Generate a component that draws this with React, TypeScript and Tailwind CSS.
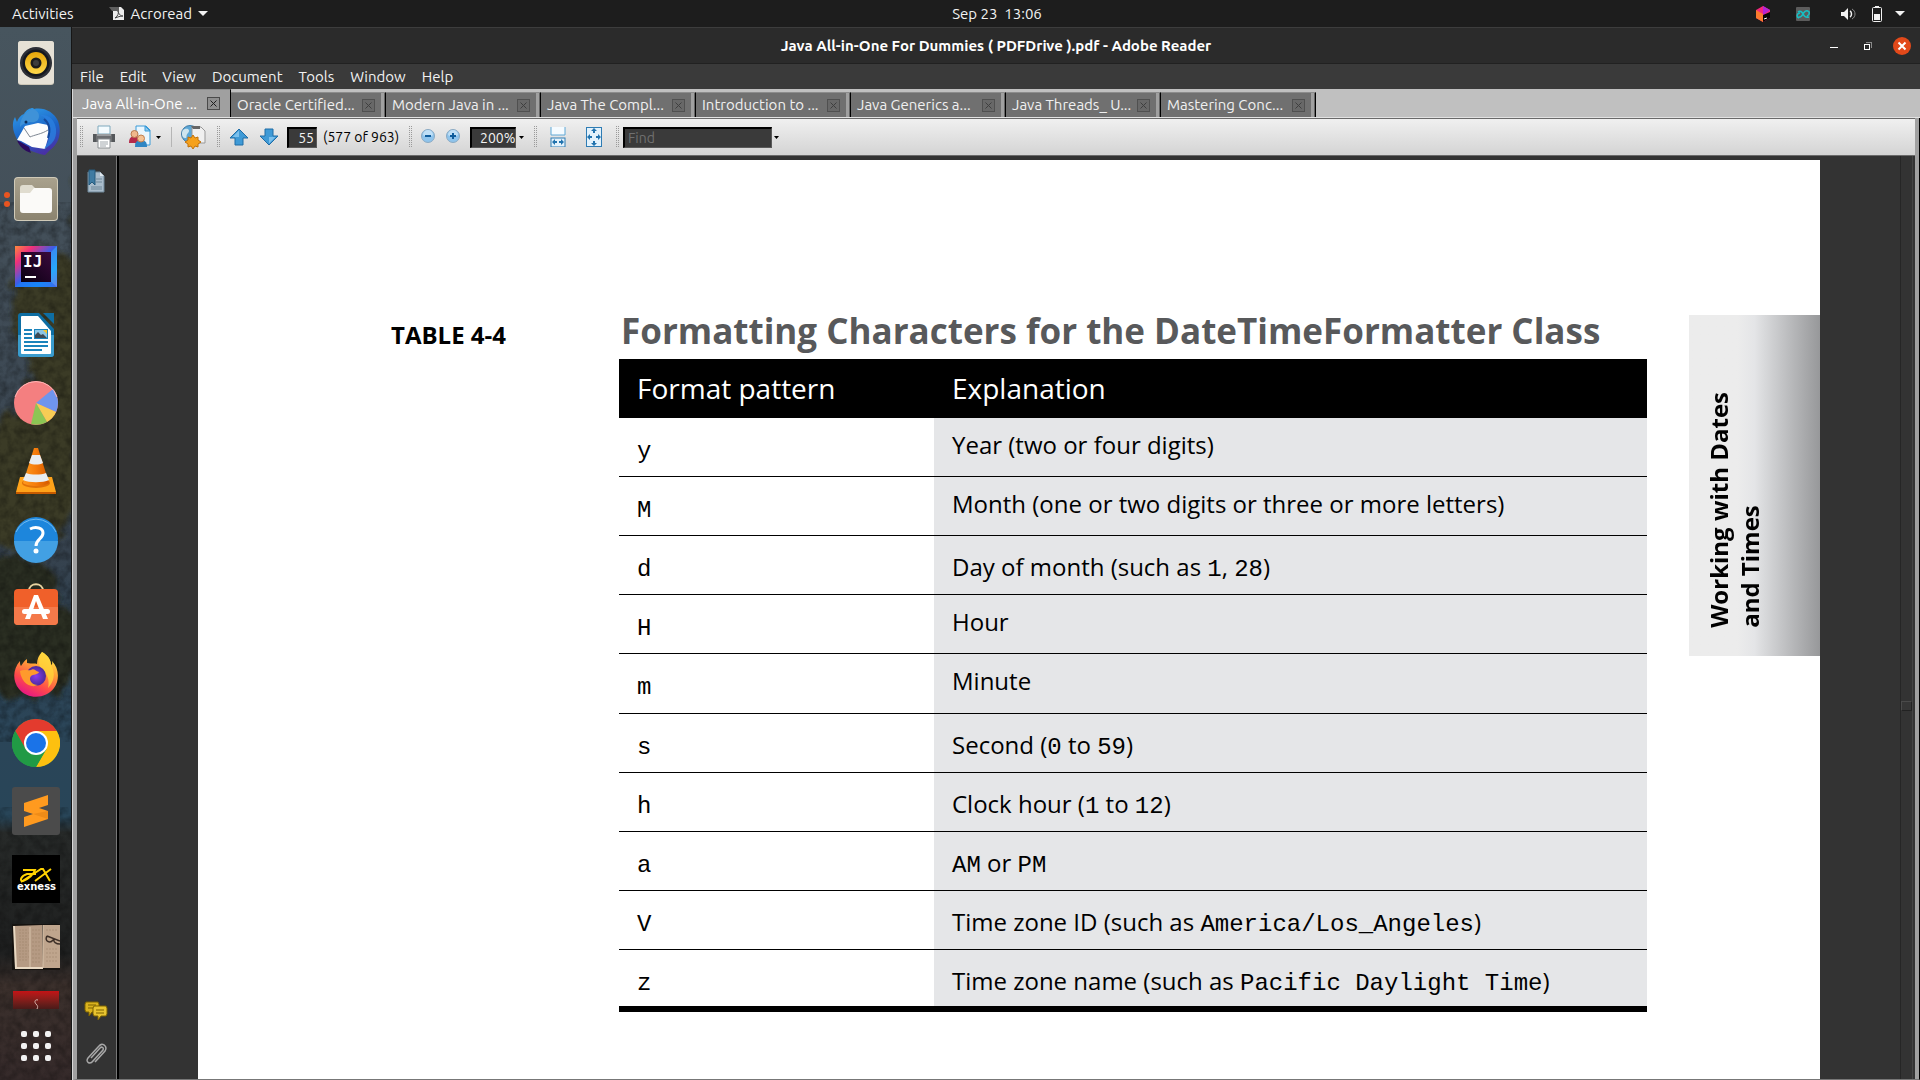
import React from "react";

const UI = "font-['Ubuntu','Open_Sans',sans-serif]";

/* ---------- dock icons ---------- */

const Rhythmbox = () => (
  <svg viewBox="0 0 48 48" className="size-12">
    <defs>
      <linearGradient id="rb" x1="0" y1="0" x2="0" y2="1"><stop offset="0" stopColor="#e5a50a" /><stop offset="1" stopColor="#ffd84a" /></linearGradient>
    </defs>
    <rect x="6" y="2" width="36" height="44" rx="3" fill="#cdc7b8" />
    <rect x="6" y="2" width="36" height="43" rx="3" fill="#e6e1d6" />
    <circle cx="24" cy="24" r="16" fill="#2d2f36" />
    <circle cx="24" cy="24" r="13.500" fill="#15181f" />
    <circle cx="24" cy="24" r="11" fill="url(#rb)" />
    <circle cx="24" cy="24" r="5.500" fill="#1b1b1b" />
    <circle cx="24" cy="24" r="3" fill="#3c3c3c" />
  </svg>
);

const Thunderbird = () => (
  <svg viewBox="0 0 48 48" className="size-12">
    <defs>
      <linearGradient id="tb" x1="0.2" y1="0" x2="0.6" y2="1"><stop offset="0" stopColor="#2f9be8" /><stop offset="0.55" stopColor="#1b63c6" /><stop offset="1" stopColor="#4a2fa5" /></linearGradient>
    </defs>
    <path d="M6 34C1 26 -1 17 3 10l2 5c1-4 4-7 7-8C14 3 18 1 21 1l1 1c10-2 20 3 24 12 4 11 1 23-8 29l-5 5C22 46 12 42 6 34z" fill="url(#tb)" />
    <path d="M5 33c2 6 7 11 14 13l-2-6z" fill="#2c0b5e" />
    <path d="M5 33L13 19l13-3 10 2 2 6-5 18-13-2-11-6z" fill="#fdfdfd" />
    <path d="M12 21l6 9c4-2 12-3 18-7" fill="none" stroke="#7d8692" strokeWidth="1" />
    <path d="M8 20C8 12 13 4 21 2c3 1 6 3 6 7 0 5-4 7-9 6-4 1-8 2-10 5z" fill="#3f92d8" />
    <path d="M28 8c6 2 11 8 10 17-1 8-3 12-6 17 8-4 13-10 12-20C43 13 37 7 28 8z" fill="#2a7fe0" opacity=".8" />
    <path d="M32 12c5 4 7 10 4 19" fill="none" stroke="#164a9c" strokeWidth="2" />
    <circle cx="14" cy="15" r="1.500" fill="#0c2e5c" />
  </svg>
);

const Files = () => (
  <svg viewBox="0 0 48 48" className="size-12">
    <defs><linearGradient id="fl" x1="0" y1="0" x2="0" y2="1"><stop offset="0" stopColor="#a9a18d" /><stop offset="1" stopColor="#8b836f" /></linearGradient></defs>
    <rect x="2" y="2" width="44" height="44" rx="4" fill="#d0cab8" />
    <rect x="3" y="3" width="42" height="42" rx="3" fill="url(#fl)" />
    <path d="M8 13a3 3 0 013-3h9l3 3h14v8H8z" fill="#e0dccf" />
    <path d="M8 18h10l4-5h15a3 3 0 013 3v19a3 3 0 01-3 3H11a3 3 0 01-3-3z" fill="#fbfaf8" />
  </svg>
);

const Idea = () => (
  <svg viewBox="0 0 48 48" className="size-12">
    <defs>
      <linearGradient id="ij" x1="0" y1="0" x2="1" y2="1"><stop offset="0" stopColor="#ff8a3c" /><stop offset="0.22" stopColor="#f0307a" /><stop offset="0.48" stopColor="#3a5ee8" /><stop offset="0.75" stopColor="#149cf7" /><stop offset="1" stopColor="#8a4bd0" /></linearGradient>
      <linearGradient id="ij2" x1="0" y1="1" x2="1" y2="0"><stop offset="0" stopColor="#080010" /><stop offset="1" stopColor="#3a0a3c" /></linearGradient>
    </defs>
    <rect x="3" y="3" width="42" height="41" fill="url(#ij)" />
    <path d="M45 3l-6 6v30l6 5z" fill="#39b4ff" opacity=".5" />
    <path d="M3 44l6-5h30l6 5z" fill="#1a7cf9" opacity=".7" />
    <rect x="9" y="9" width="30" height="30" fill="url(#ij2)" />
    <text x="11" y="24" fontSize="16" fontWeight="700" fill="#fff" fontFamily="DejaVu Sans Mono, monospace">IJ</text>
    <rect x="13" y="33" width="11" height="2" fill="#fff" />
  </svg>
);

const Writer = () => (
  <svg viewBox="0 0 48 48" className="size-12">
    <path d="M9 2h18l15 16v25a3 3 0 01-3 3H9a3 3 0 01-3-3V5a3 3 0 013-3z" fill="#0e6ea3" />
    <path d="M6 24h36v19a3 3 0 01-3 3H9a3 3 0 01-3-3z" fill="#3a9ccd" />
    <path d="M10 5h16l13 15v22a1 1 0 01-1 1H10a1 1 0 01-1-1V6a1 1 0 011-1z" fill="#fff" />
    <path d="M31 2h11v11z" fill="#0e6ea3" />
    <g fill="#1a83bb"><rect x="12" y="18" width="8" height="2" /><rect x="12" y="22" width="8" height="2" /><rect x="12" y="26" width="8" height="2" /><rect x="12" y="30" width="24" height="2" /><rect x="12" y="34" width="24" height="2" /><rect x="12" y="38" width="18" height="2" /></g>
    <rect x="22" y="18" width="14" height="10" fill="#1a83bb" /><rect x="23" y="19" width="12" height="8" fill="#8cc5e6" />
    <path d="M23 27v-3l3-3 3 3 2-1 4 4z" fill="#3d4a55" /><path d="M31 19h4v4z" fill="#f6c52c" />
  </svg>
);

const Pie = () => (
  <svg viewBox="0 0 48 48" className="size-12">
    <circle cx="24" cy="24" r="22" fill="#f47f80" />
    <path d="M24 24L41 10A22 22 0 0144 33z" fill="#6f95ee" />
    <path d="M24 24l20 9a22 22 0 01-9 10z" fill="#f7cc55" />
    <path d="M24 24l11 19a22 22 0 01-16 2z" fill="#8cc654" />
    <path d="M3 18A22 22 0 0145 18" fill="none" stroke="#ffb3b3" strokeWidth="1" />
  </svg>
);

const Vlc = () => (
  <svg viewBox="0 0 48 48" className="size-12">
    <defs><linearGradient id="vl" x1="0" y1="0" x2="1" y2="0"><stop offset="0" stopColor="#ff9a1f" /><stop offset="0.5" stopColor="#f57b0a" /><stop offset="1" stopColor="#d45a00" /></linearGradient></defs>
    <path d="M8 30h32l4 15H4z" fill="#ffa31a" /><path d="M4 45h40v2H4z" fill="#c65b00" />
    <ellipse cx="24" cy="36" rx="14" ry="5" fill="#e07008" />
    <path d="M22 1h4l11 35c-4 4-22 4-26 0z" fill="url(#vl)" />
    <path d="M20 8h8l3 8c-4 2-10 2-14 0z" fill="#e9edf0" />
    <path d="M14 26c5 2 15 2 20 0l3 7c-6 3-20 3-26 0z" fill="#e9edf0" />
  </svg>
);

const Help = () => (
  <svg viewBox="0 0 48 48" className="size-12">
    <circle cx="24" cy="24" r="22" fill="#1d86dc" />
    <path d="M2 26h44a22 22 0 01-44 0z" fill="#42a0e4" />
    <path d="M4 17a22 22 0 0140 0" fill="none" stroke="#6fbaf2" strokeWidth="1" />
    <path d="M18 14c6-3 13-1 13 4 0 6-7 6-7 13" fill="none" stroke="#fff" strokeWidth="3" />
    <circle cx="24" cy="36" r="2.500" fill="#fff" />
  </svg>
);

const Software = () => (
  <svg viewBox="0 2 48 48" className="size-12">
    <path d="M17 10c0-9 14-9 14 0" fill="none" stroke="#e8d3a0" strokeWidth="2" />
    <rect x="2" y="8" width="44" height="36" rx="4" fill="#f0602a" />
    <path d="M2 26h44v14a4 4 0 01-4 4H6a4 4 0 01-4-4z" fill="#f4794a" />
    <path d="M22 14h4l10 24h-5L24 20l-6 18h-5z" fill="#fff" />
    <rect x="10" y="28" width="28" height="5" rx="2.500" fill="#fff" />
  </svg>
);

const Firefox = () => (
  <svg viewBox="0 0 48 48" className="size-12">
    <defs>
      <linearGradient id="ff" x1="0.8" y1="0" x2="0.3" y2="1"><stop offset="0" stopColor="#fff44f" /><stop offset="0.35" stopColor="#ffa436" /><stop offset="0.7" stopColor="#ff4a4a" /><stop offset="1" stopColor="#e31587" /></linearGradient>
      <radialGradient id="ff2"><stop offset="0" stopColor="#8a3df0" /><stop offset="1" stopColor="#4b2a9a" /></radialGradient>
    </defs>
    <path d="M30 1c7 4 9 9 9 13 2-1 1-3 1-4 7 7 8 19 2 27-8 11-26 12-35 1C0 29 1 18 8 10c0 2 0 4 1 5 2-3 3-5 6-7v4c5 1 8 0 10 1 0-5 2-9 5-12z" fill="url(#ff)" />
    <path d="M30 1c7 4 9 9 9 13 5 8 3 17-3 23 2-8-1-15-6-18-4-3-4-11 0-18z" fill="#ffd43a" opacity=".8" />
    <circle cx="24" cy="25" r="10" fill="url(#ff2)" />
    <path d="M8 20c4-2 8 0 11-1 3-2 4 1 8 2-1 3-6 2-8 4-3 4 1 9 7 9-8 4-17-3-18-14z" fill="#ff9a2c" />
  </svg>
);

const Chrome = () => (
  <svg viewBox="0 0 48 48" className="size-12">
    <circle cx="24" cy="24" r="24" fill="#2da84f" />
    <path d="M24 24L3.200 12A24 24 0 0144.800 12z" fill="#e33b2e" />
    <path d="M24 12h20.800A24 24 0 0124 48l10.400-18z" fill="#fdc010" />
    <path d="M3.200 12L13.600 30 24 24 24 12z" fill="#e33b2e" />
    <path d="M3.200 12l10.400 18L24 36l10.400-6L24 48A24 24 0 013.200 12z" fill="#219a45" />
    <circle cx="24" cy="24" r="12" fill="#fff" /><circle cx="24" cy="24" r="10" fill="#1a73e8" />
  </svg>
);

const Sublime = () => (
  <svg viewBox="0 0 48 48" className="size-12">
    <rect width="48" height="48" rx="3" fill="#4b4b4b" />
    <path d="M12 16l24-8v10l-9 3 9 3v8l-24 8V30l9-3-9-3z" fill="#ff9a1f" />
    <path d="M21 27l15-3v8z" fill="#e07e10" opacity=".5" />
  </svg>
);

const Exness = () => (
  <svg viewBox="0 0 48 48" className="size-12">
    <rect width="48" height="48" fill="#000" />
    <path d="M11 15h12c-2 5-6 9-12 11-4 0-2-5 4-7h9M9 27L29 14h2l7 12M39 14L23 26" fill="none" stroke="#ffd200" strokeWidth="2" />
    <text x="5" y="35" fontSize="10" fontWeight="700" fill="#fff" fontFamily="DejaVu Sans, sans-serif">exness</text>
  </svg>
);

const Book = () => (
  <svg viewBox="0 0 48 48" className="size-12">
    <rect y="1" width="48" height="46" fill="#15120f" />
    <path d="M2 3l28-1 1 43-28 1z" fill="#b59a83" /><path d="M31 2h17v43H31z" fill="#bfa58d" />
    <path d="M2 3l2 42h27" fill="none" stroke="#e8d8c2" strokeWidth="2" />
    <g stroke="#9b8069" strokeWidth="1" strokeDasharray="2 1" opacity=".55">
      <path d="M7 7h9M7 10h10M7 13h9M7 16h10M7 19h9M7 22h10M7 25h9M7 28h10M7 31h9M7 34h10M7 37h9M20 7h9M20 11h9M20 15h8M20 19h9M20 23h9M20 27h8M20 31h9M20 35h9M20 39h8M34 7h12M34 26h12M34 30h11M34 34h12M34 38h11" />
    </g>
    <path d="M31 2v43M18 4v40" stroke="#d8c3ab" strokeWidth="1" />
    <path d="M35 13l13 5M35 13c-3 5 3 8 6 4l2-1M42 16c-1 3 2 5 6 5" fill="none" stroke="#3d2f27" strokeWidth="1.500" />
  </svg>
);

const DockWallpaper = () => (
  <svg viewBox="0 0 71 1053" preserveAspectRatio="none" className="absolute inset-0 size-full">
    <defs>
      <linearGradient id="sky" x1="0" y1="0" x2="0" y2="1">
        <stop offset="0" stopColor="#47555e" /><stop offset="0.2" stopColor="#434f59" /><stop offset="0.5" stopColor="#36424e" />
        <stop offset="0.66" stopColor="#2b4558" /><stop offset="0.75" stopColor="#284558" /><stop offset="0.765" stopColor="#272a29" />
        <stop offset="0.88" stopColor="#1f2020" /><stop offset="0.91" stopColor="#3b302c" /><stop offset="1" stopColor="#352a2a" />
      </linearGradient>
      <filter id="leaf" x="-20%" y="-5%" width="140%" height="110%">
        <feTurbulence type="fractalNoise" baseFrequency="0.08" numOctaves="3" seed="4" result="n" />
        <feDisplacementMap in="SourceGraphic" in2="n" scale="26" />
        <feGaussianBlur stdDeviation="2" />
      </filter>
      <filter id="grain"><feTurbulence type="fractalNoise" baseFrequency="0.12" numOctaves="3" seed="9" /><feColorMatrix values="0 0 0 0 0  0 0 0 0 0  0 0 0 0 0  1.5 0 0 0 -0.5" /></filter>
    </defs>
    <rect width="71" height="1053" fill="url(#sky)" />
    <g filter="url(#leaf)" fill="#3a3b25">
      <ellipse cx="84" cy="170" rx="10" ry="50" />
      <ellipse cx="52" cy="285" rx="40" ry="60" />
      <ellipse cx="60" cy="380" rx="40" ry="50" />
      <ellipse cx="24" cy="455" rx="54" ry="70" />
      <ellipse cx="24" cy="620" rx="66" ry="50" fill="#2c2d22" />
      <ellipse cx="14" cy="560" rx="44" ry="30" fill="#2c2d22" />
    </g>
    <rect y="220" width="71" height="450" filter="url(#grain)" opacity=".4" />
    <rect y="805" width="71" height="248" filter="url(#grain)" opacity=".35" />
  </svg>
);

const dock = [
  ["Rhythmbox", Rhythmbox], ["Thunderbird Mail", Thunderbird], ["Files", Files], ["IntelliJ IDEA", Idea], ["LibreOffice Writer", Writer],
  ["Disk Usage", Pie], ["VLC", Vlc], ["Help", Help], ["Ubuntu Software", Software], ["Firefox", Firefox], ["Chrome", Chrome],
  ["Sublime Text", Sublime], ["Exness", Exness], ["Reader", Book],
] as const;

function Dock() {
  return (
    <nav className="relative w-[72px] shrink-0 overflow-hidden border-r border-[#161616] bg-[#2c3a40]">
      <DockWallpaper />
      <div className="relative flex h-full flex-col items-center pt-3">
        <div className="flex flex-col gap-5">
          {dock.map(([name, Icon]) => (
            <button key={name} aria-label={name} className="relative block size-12">
              <Icon />
              {name === "Files" && (
                <span className="absolute top-[17px] -left-2 flex flex-col gap-[3px]">
                  <i className="size-[6px] rounded-full bg-[#e95420]" />
                  <i className="size-[6px] rounded-full bg-[#e95420]" />
                </span>
              )}
            </button>
          ))}
        </div>
        <button aria-label="Acroread" className="mt-5 h-[18px] w-[46px] bg-linear-to-b from-[#c41215] to-[#4a1a18] pt-2">
          <svg viewBox="0 0 8 10" className="mx-auto h-[10px] w-2"><path d="M6 1C3 0 2 3 4 5s2 3 1 5" fill="none" stroke="#d8b8b0" strokeWidth="1" /></svg>
        </button>
        <button aria-label="Show Applications" className="mt-auto mb-[19px] grid grid-cols-3 gap-[6px]">
          {Array.from({ length: 9 }, (_, i) => <i key={i} className="size-[6px] rounded-[2px] bg-[#f2f2f2]" />)}
        </button>
      </div>
    </nav>
  );
}

/* ---------- desktop bar ---------- */

const Caret = ({ className }: { className: string }) => (
  <svg viewBox="0 0 10 5" className={className}><path d="M0 0h10L5 5z" fill="currentColor" /></svg>
);

function TopBar() {
  return (
    <header className="grid h-[27px] shrink-0 grid-cols-[1fr_auto_1fr] items-center bg-[#1d1d1d] pl-[74px] text-[15px] leading-6 text-[#f2f2f2]">
      <div className="-ml-[62px] flex items-center">
        <button>Activities</button>
        <button className="ml-[35px] flex items-center">
          <svg viewBox="0 0 16 16" className="mr-[6px] size-4">
            <path d="M4 1h8l3 3v10H4z" fill="#ececec" /><path d="M0 1h10v4H3z" fill="#5f5f5f" />
            <path d="M6 12c3-2 4-5 3-7 1 4 3 5 5 5-3 0-5 1-8 2z" fill="none" stroke="#444" strokeWidth="1" />
          </svg>
          Acroread
          <Caret className="ml-[6px] h-[5px] w-[10px]" />
        </button>
      </div>
      <time className="whitespace-pre">Sep 23  13:06</time>
      <div className="flex items-center justify-end pr-[15px]">
        <svg viewBox="0 0 14 16" className="mr-[26px] h-4 w-[14px]">
          <path d="M7 0l7 4v8l-7 4-7-4V4z" fill="#f5277c" /><path d="M0 4l7 4v8l-7-4z" fill="#fb7a2e" /><path d="M7 0l7 4-7 5z" fill="#b324d6" />
          <path d="M7 9l7-3v6l-7 4z" fill="#050505" /><path d="M8 13l3-1" stroke="#fff" strokeWidth="1" />
        </svg>
        <svg viewBox="0 0 14 14" className="mr-[31px] size-[14px]">
          <rect width="14" height="14" rx="1" fill="#5c5c5c" />
          <path d="M1 10c3 1 5-1 6-3s3-4 5-3M2 5c2-2 4 0 5 2s3 4 6 3M3 11c-3-1-2-5 1-5M11 9c3-1 3-5 0-5" fill="none" stroke="#17c0c4" strokeWidth="1.500" />
        </svg>
        <svg viewBox="0 0 15 14" className="mr-4 h-[14px] w-[15px]">
          <path d="M0 5h3l4-4v12L3 9H0z" fill="#f2f2f2" /><path d="M9 4c2 1 2 5 0 6" fill="none" stroke="#f2f2f2" strokeWidth="1.500" /><path d="M11 2c4 2 4 8 0 10" fill="none" stroke="#8a8a8a" strokeWidth="1" />
        </svg>
        <svg viewBox="0 0 10 16" className="mr-[13px] h-4 w-[10px]">
          <path d="M3 0h4v2H3z" fill="#f2f2f2" /><rect x="0.500" y="1.500" width="9" height="14" rx="1" fill="none" stroke="#f2f2f2" strokeWidth="1" /><path d="M2 8h6v6H2z" fill="#f2f2f2" />
        </svg>
        <Caret className="h-[5px] w-[10px]" />
      </div>
    </header>
  );
}

/* ---------- window chrome ---------- */

function TitleBar() {
  return (
    <div className="grid h-[37px] shrink-0 grid-cols-[1fr_auto_1fr] items-center border-t border-b border-t-[#3d3d3d] border-b-[#212121] bg-[#2b2b2b] text-[15px] leading-6 font-bold text-white">
      <h1 className="col-start-2">Java All-in-One For Dummies ( PDFDrive ).pdf - Adobe Reader</h1>
      <div className="flex items-center justify-end pr-[9px]">
        <button aria-label="Minimize" className="mr-[26px] h-[5px] w-2 border-b border-white" />
        <button aria-label="Restore" className="mr-[21px]">
          <svg viewBox="0 0 8 8" className="block size-2" shapeRendering="crispEdges"><path d="M2 0h6v6H7V1H2z" fill="#8a8a8a" /><path d="M0 2h6v6H0zM1 3v4h4V3z" fillRule="evenodd" fill="#fff" /></svg>
        </button>
        <button aria-label="Close">
          <svg viewBox="0 0 18 18" className="block size-[18px]"><circle cx="9" cy="9" r="9" fill="#e2491a" /><path d="M5.500 5.500l7 7m0-7l-7 7" stroke="#fff" strokeWidth="2" /></svg>
        </button>
      </div>
    </div>
  );
}

const menus = ["File", "Edit", "View", "Document", "Tools", "Window", "Help"];
const tabs = ["Java All-in-One ...", "Oracle Certified...", "Modern Java in ...", "Java The Compl...", "Introduction to ...", "Java Generics a...", "Java Threads_ U...", "Mastering Conc..."];

const TabClose = ({ active }: { active: boolean }) => (
  <svg viewBox="0 0 13 13" className={active ? "block size-[13px] text-[#1e1e1e]" : "block size-[13px] text-[#3f3f3f]"}>
    <rect x="0.500" y="0.500" width="12" height="12" fill={active ? "#8f8f8f" : "#686868"} stroke={active ? "#4a4a4a" : "#505050"} />
    <path d="M3.500 3.500l6 6m0-6l-6 6" stroke="currentColor" strokeWidth="1" />
  </svg>
);

function Tabs() {
  return (
    <div className="flex h-[29px] shrink-0 items-end border-b border-[#e2e2e2] bg-[#c0c0c0] text-[15px] leading-6">
      {tabs.map((t, i) =>
        i === 0 ? (
          <div key={t} className="flex h-full w-[158px] items-center border-t border-r border-t-[#8c8c8c] border-r-black bg-[#a0a0a0] pr-[10px] pl-[9px] text-white">
            <button className="min-w-0 flex-1 text-left whitespace-nowrap">{t}</button>
            <button aria-label="Close tab"><TabClose active /></button>
          </div>
        ) : (
          <div key={t} className="flex h-[25px] w-[155px] items-center border-t border-r border-t-[#8c8c8c] border-r-black bg-[#707070] text-[#f0f0f0]">
            <button className="min-w-0 flex-1 pl-[6px] text-left whitespace-nowrap">{t}</button>
            <button aria-label="Close tab" className="mr-[6px]"><TabClose active={false} /></button>
            <i className="h-full w-[4px] border-r border-[#666] bg-[#a0a0a0]" />
          </div>
        )
      )}
    </div>
  );
}

const Grip = ({ className = "" }: { className?: string }) => (
  <svg viewBox="0 0 4 22" className={"h-[22px] w-1 shrink-0 " + className} shapeRendering="crispEdges">
    <path d="M0.500 0v22M2.500 0v22" stroke="#9a9a9a" strokeWidth="1" strokeDasharray="1 1" />
  </svg>
);
const Drop = ({ className = "" }: { className?: string }) => (
  <svg viewBox="0 0 5 3" className={"h-[3px] w-[5px] shrink-0 " + className}><path d="M0 0h5L2.500 3z" fill="#000" /></svg>
);
const Arrow = ({ down = false }: { down?: boolean }) => (
  <svg viewBox="0 0 20 18" className={down ? "block h-[18px] w-5 rotate-180" : "block h-[18px] w-5"}>
    <path d="M10 1l9 9h-5v7H6v-7H1z" fill="#3f9ad6" stroke="#1f6ca6" strokeWidth="1" strokeLinejoin="round" />
    <path d="M10 2.500L3.500 9H10z" fill="#7cc0ec" />
  </svg>
);
const Zoom = ({ plus = false }: { plus?: boolean }) => (
  <svg viewBox="0 0 14 14" className="block size-[14px]">
    <circle cx="7" cy="7" r="6.500" fill="#8fc4ec" stroke="#8aa9c2" strokeWidth="1" />
    <path d="M2 6a5 5 0 0110 0c-3 2-7 2-10 0z" fill="#bfdff6" />
    <path d={plus ? "M4 7h6M7 4v6" : "M4 7h6"} stroke="#0e5c9c" strokeWidth="2" />
  </svg>
);

const field = "h-[21px] border border-t-2 border-l-2 border-black border-r-[#5a5a5a] border-b-[#5a5a5a] bg-[#3a3a3a] text-[#f2f2f2] outline-none";

function Toolbar() {
  return (
    <div className="flex h-[38px] shrink-0 items-center border-t border-b border-t-[#6a6a6a] border-b-[#6a6a6a] bg-linear-to-b from-[#f0f0f0] to-[#d4d4d4] pl-[3px] text-sm text-black">
      <Grip />
      <button aria-label="Print" className="ml-2">
        <svg viewBox="0 0 24 24" className="block size-6">
          <path d="M6 1h12v8H6z" fill="#f4fbfe" stroke="#7fa9bd" strokeWidth="1" />
          <path d="M3 9h18l1 2v6H2v-6z" fill="#6d6f72" /><path d="M1 9h3v8H1zM20 9h3v8h-3z" fill="#55585b" /><path d="M5 9h14v2H5z" fill="#9b9ea1" />
          <path d="M6 14h12v9H6z" fill="#fff" stroke="#8a8f92" strokeWidth="1" /><path d="M8 17h8M8 19h8M8 21h6" stroke="#9fa6ab" strokeWidth="1" />
        </svg>
      </button>
      <button aria-label="Collaborate" className="ml-[12px] flex items-center">
        <svg viewBox="0 0 24 24" className="block size-6">
          <path d="M8 1h10l4 4v15H8z" fill="#eaf6fe" stroke="#3b9bd8" strokeWidth="1" /><path d="M17 1v5h5z" fill="#8fcbee" stroke="#3b9bd8" strokeWidth="1" />
          <path d="M1 18c0-5 2-7 6-7s5 2 5 7z" fill="#b52a4a" /><circle cx="6.500" cy="9" r="3.500" fill="#f0b88c" stroke="#b87a4e" strokeWidth="1" />
          <path d="M7 22c0-5 2-7 6-7s6 2 6 7z" fill="#2f86c4" /><circle cx="13" cy="13.500" r="3.500" fill="#f5c294" stroke="#c07f4e" strokeWidth="1" />
        </svg>
        <Drop className="ml-[4px]" />
      </button>
      <i className="ml-[10px] h-5 w-px bg-[#b5b5b5]" />
      <button aria-label="Create PDF" className="ml-2">
        <svg viewBox="0 0 26 24" className="block h-6 w-[26px]">
          <circle cx="10" cy="9" r="8.500" fill="#5da7d6" stroke="#417ca6" strokeWidth="1" /><path d="M3 5c4-3 8 0 5 3s0 5-3 5-4-5-2-8z" fill="#cfe5ee" />
          <path d="M12 2h9l4 4v12H12z" fill="#f0f0f0" stroke="#999" strokeWidth="1" /><path d="M11 1h9v3h-7z" fill="#666" />
          <path d="M13 10l2 3 3-1v3l3 2-3 2v3l-3-1-2 3-2-3-3 1v-3l-3-2 3-2v-3l3 1z" fill="#f5a11c" stroke="#c2720a" strokeWidth="1" />
        </svg>
      </button>
      <Grip className="ml-[11px]" />
      <button aria-label="Previous page" className="ml-2"><Arrow /></button>
      <button aria-label="Next page" className="ml-[10px]"><Arrow down /></button>
      <input aria-label="Page" defaultValue="55" className={field + " ml-2 w-[30px] pr-[2px] text-right"} />
      <span className="ml-[6px] w-[81px] whitespace-nowrap">(577 of 963)</span>
      <Grip className="ml-[5px]" />
      <button aria-label="Zoom out" className="-mt-[2px] ml-2"><Zoom /></button>
      <button aria-label="Zoom in" className="-mt-[2px] ml-[11px]"><Zoom plus /></button>
      <input aria-label="Zoom level" defaultValue="200%" className={field + " ml-[10px] w-[46px] pl-[8px]"} />
      <Drop className="ml-[3px]" />
      <Grip className="ml-[10px]" />
      <button aria-label="Fit width" className="ml-3">
        <svg viewBox="0 0 16 20" className="block h-5 w-4">
          <path d="M1 0v8h14V0" fill="#f5fbff" stroke="#5fa8d6" strokeWidth="1" /><rect x="1" y="11" width="14" height="9" fill="#e3f2fc" stroke="#2e7cb4" strokeWidth="1" />
          <path d="M2 15l3-3v2h2v2H5v2zM14 15l-3-3v2H9v2h2v2z" fill="#2273ae" />
        </svg>
      </button>
      <button aria-label="Fit page" className="ml-5">
        <svg viewBox="0 0 16 20" className="block h-5 w-4">
          <rect x="0.500" y="0.500" width="15" height="19" fill="#e3f2fc" stroke="#2e7cb4" strokeWidth="1" />
          <path d="M8 1l3 3H9v2H7V4H5zM8 19l3-3H9v-2H7v2H5zM1 10l3-3v2h2v2H4v2zM15 10l-3-3v2h-2v2h2v2z" fill="#2273ae" />
        </svg>
      </button>
      <Grip className="ml-[14px]" />
      <input aria-label="Find" placeholder="Find" className={field + " ml-[3px] w-[149px] pl-[3px] placeholder:text-[#707070]"} />
      <Drop className="ml-[2px]" />
    </div>
  );
}

/* ---------- document ---------- */

const Code = ({ children }: { children: React.ReactNode }) => <code className="font-['Liberation_Mono',monospace] text-2xl leading-8">{children}</code>;

const rows: { p: string; e: React.ReactNode; code?: boolean }[] = [
  { p: "y", e: "Year (two or four digits)" },
  { p: "M", e: "Month (one or two digits or three or more letters)" },
  { p: "d", e: <>Day of month (such as <Code>1</Code>, <Code>28</Code>)</>, code: true },
  { p: "H", e: "Hour" },
  { p: "m", e: "Minute" },
  { p: "s", e: <>Second (<Code>0</Code> to <Code>59</Code>)</>, code: true },
  { p: "h", e: <>Clock hour (<Code>1</Code> to <Code>12</Code>)</>, code: true },
  { p: "a", e: <><Code>AM</Code> or <Code>PM</Code></>, code: true },
  { p: "V", e: <>Time zone ID (such as <Code>America/Los_Angeles</Code>)</>, code: true },
  { p: "z", e: <>Time zone name (such as <Code>Pacific Daylight Time</Code>)</>, code: true },
];

function Page() {
  return (
    <article className="mt-1 mr-20 ml-[79px] grid min-w-0 flex-1 grid-cols-[421px_1fr_173px] bg-white font-['Open_Sans',sans-serif] text-black">
      <p className="pt-[159px] pl-[193px] text-2xl leading-8 font-bold">TABLE 4-4</p>
      <section className="pt-[146px]">
        <h2 className="h-[53px] pl-[2px] text-[35px] leading-[50px] font-bold whitespace-nowrap text-[#58595b]">Formatting Characters for the DateTimeFormatter Class</h2>
        <table className="w-full table-fixed border-separate border-spacing-0 border-b-[6px] border-black text-left text-2xl leading-8">
          <thead>
            <tr className="h-[59px] bg-black text-[28px] text-white">
              <th className="w-[315px] pb-[2px] pl-[18px] font-normal">Format pattern</th>
              <th className="pb-[2px] pl-[18px] font-normal">Explanation</th>
            </tr>
          </thead>
          <tbody>
            {rows.map((r, i) => {
              const last = i === rows.length - 1;
              return (
                <tr key={r.p} className={last ? "h-[56px]" : r.p === "m" ? "h-[60px]" : "h-[59px]"}>
                  <td className={(last ? "" : "border-b border-black ") + "pt-[15px] pl-[18px] align-top"}><Code>{r.p}</Code></td>
                  <td className={(last ? "" : "border-b border-black ") + (r.code ? "pt-[15px] " : "pt-[11px] ") + "bg-[#e5e6e8] pl-[18px] align-top whitespace-nowrap"}>{r.e}</td>
                </tr>
              );
            })}
          </tbody>
        </table>
      </section>
      <aside className="mt-[155px] ml-[42px] flex h-[341px] items-end bg-linear-to-r from-[#ececec] from-37% via-[#e4e5e7] via-50% to-[#97989a] pb-7 pl-[14px]">
        <p className="rotate-180 text-2xl leading-[31px] font-bold whitespace-nowrap [writing-mode:vertical-rl]">Working with Dates<br />and Times</p>
      </aside>
    </article>
  );
}

function SidePanel() {
  return (
    <aside className="flex w-[42px] shrink-0 flex-col items-center border-r-2 border-black bg-[#333] pt-[13px] pr-[2px] pb-[11px] shadow-[inset_-1px_0_0_#777]">
      <button aria-label="Bookmarks">
        <svg viewBox="0 0 20 24" className="block h-6 w-5">
          <path d="M2 3h12l4 4v16H2z" fill="#a9bccb" stroke="#6f8798" strokeWidth="1" /><path d="M14 3v4h4z" fill="#dfe8ee" />
          <path d="M10 10h6M10 13h6M5 18h11M5 20h11" stroke="#6f8798" strokeWidth="1" /><path d="M3 1h6v15l-3-3-3 3z" fill="#3f7ba2" stroke="#265a7c" strokeWidth="1" />
        </svg>
      </button>
      <button aria-label="Comments" className="mt-auto">
        <svg viewBox="0 0 24 20" className="block h-5 w-6">
          <path d="M2 1h12l1 2v6l-2 2H8l-3 4v-4H2l-1-2V3z" fill="#d9b21e" stroke="#7d6200" strokeWidth="1" /><path d="M4 4h8M4 7h5" stroke="#7d6200" strokeWidth="1" />
          <path d="M10 5h12l1 2v6l-1 2h-5l-3 4v-4h-4l-1-2V7z" fill="#e8c430" stroke="#7d6200" strokeWidth="1" /><path d="M12 9h8M12 12h8" stroke="#7d6200" strokeWidth="1" />
        </svg>
      </button>
      <button aria-label="Attachments" className="mt-[21px] mb-[2px]">
        <svg viewBox="0 0 24 24" className="block size-6">
          <path d="M7 16L16 6c2-2 4 0 3 2L9 19c-3 4-8 1-5-3L15 4c3-4 9 0 6 5L11 20" fill="none" stroke="#a8a8a8" strokeWidth="1.500" />
        </svg>
      </button>
    </aside>
  );
}

export default function App() {
  return (
    <div className={"flex h-screen flex-col overflow-hidden bg-black " + UI}>
      <TopBar />
      <div className="flex min-h-0 flex-1">
        <Dock />
        <main className="flex min-w-0 flex-1 flex-col">
          <TitleBar />
          <nav className="flex h-[25px] shrink-0 items-center gap-4 bg-[#3a3a3a] pl-2 text-[15px] leading-6 text-[#f2f2f2]">
            {menus.map((m) => <button key={m}>{m}</button>)}
          </nav>
          <div className="flex min-h-0 flex-1 flex-col border-l border-[#d8d8d8] text-sm">
            <Tabs />
            <div className="flex min-h-0 flex-1 flex-col border-r border-b border-l-4 border-r-black border-b-[#777] border-l-[#a0a0a0]">
              <div className="flex min-h-0 flex-1 flex-col border-r-4 border-[#a0a0a0]">
                <Toolbar />
                <div className="flex min-h-0 flex-1 bg-[#333]">
                  <SidePanel />
                  <Page />
                  <div className="mr-[2px] flex w-[13px] shrink-0 flex-col border-r border-l border-r-[#444] border-l-[#262626]">
                    <i className="mt-[545px] h-[10px] border border-t-[#4a4a4a] border-r-[#222] border-b-[#222] border-l-[#4a4a4a] bg-[#363636]" />
                  </div>
                </div>
              </div>
            </div>
          </div>
        </main>
      </div>
    </div>
  );
}
